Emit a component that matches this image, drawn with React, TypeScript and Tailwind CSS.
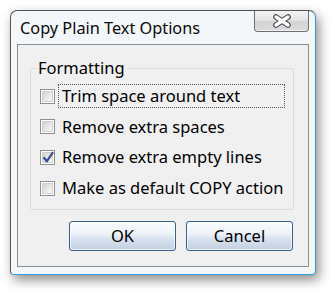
import React from "react";

const font = { fontFamily: '"Noto Sans", "Open Sans", sans-serif' };

function Check({ checked }: { checked?: boolean }) {
  return (
    <div className="w-[15px] h-[15px] shrink-0 border border-[#8e8f8f] bg-white p-[1px]">
      <div className="w-full h-full border border-[#cfcfcf] bg-[linear-gradient(135deg,#d2d2d2_0%,#e9e9e9_55%,#f7f7f7_100%)] relative">
        {checked && (
          <svg viewBox="0 0 10 10" className="absolute left-[-1px] top-[-2px] w-[12px] h-[12px]">
            <path d="M1.3 5.2 L4 8.6 L9.2 1" fill="none" stroke="#3a4f93" strokeWidth="1.9" strokeLinejoin="round" />
          </svg>
        )}
      </div>
    </div>
  );
}

function Row({ label, checked, focus }: { label: string; checked?: boolean; focus?: boolean }) {
  return (
    <div className="h-[30.6px] flex items-center">
      <Check checked={checked} />
      <div
        className={`ml-[3px] h-[24px] flex items-center pl-[3px] pr-[5px] border border-dotted ${
          focus ? "border-[#555] w-[227px]" : "border-transparent"
        } text-[16.5px] text-black whitespace-nowrap`}
      >
        {label}
      </div>
    </div>
  );
}

function Btn({ children }: { children: React.ReactNode }) {
  return (
    <div className="w-[107px] h-[30px] rounded-[3px] border border-[#3b5f8c] bg-[linear-gradient(180deg,#f7fafd_0%,#edf2f8_45%,#dbe4f0_55%,#c3d0e2_100%)] shadow-[inset_0_0_0_1px_rgba(255,255,255,0.7)] flex items-center justify-center text-[16.5px] text-black">
      {children}
    </div>
  );
}

export default function App() {
  return (
    <div className="w-[335px] h-[294px] bg-white pl-[10px] pt-[10px]" style={font}>
      <div className="w-[306px] h-[265px] flex flex-col rounded-t-[7px] rounded-b-[4px] border border-[#505357] border-r-[#3f93bd] border-b-[#2aa3dc] bg-[#f4f7f9] shadow-[3px_5px_12px_rgba(0,0,0,0.45)]">
        <div className="h-[33px] flex items-start justify-between pl-[9px] pr-[6px]">
          <div className="pt-[6px] text-[16.3px] leading-[22px] text-[#0a0a0a]">Copy Plain Text Options</div>
          <div className="w-[55px] h-[21px] border border-t-0 border-[#6c7075] rounded-b-[4px] bg-[linear-gradient(180deg,#f3f3f3_0%,#e4e4e4_45%,#d3d3d3_55%,#dcdcdc_100%)] shadow-[inset_0_-1px_0_rgba(255,255,255,0.6)] flex items-center justify-center">
            <svg viewBox="0 0 18 14" className="w-[18px] h-[14px]">
              <g strokeLinecap="round">
                <path d="M3 3 L15 11 M15 3 L3 11" stroke="#3f444b" strokeWidth="5.6" />
                <path d="M3 3 L15 11 M15 3 L3 11" stroke="#ffffff" strokeWidth="3.4" />
              </g>
            </svg>
          </div>
        </div>
        <div className="ml-[6px] w-[292px] h-[223px] border border-[#8b8e94] bg-[#f0f0f0] flex flex-col">
          <fieldset className="ml-[12px] mt-[13px] w-[264px] h-[152px] border border-[#d5dfe5] rounded-[3px] px-[4px] pb-[4px]">
            <legend className="ml-[1px] px-[2px] text-[16.5px] leading-[20px] text-black">Formatting</legend>
            <div className="pl-[5px] pt-[3px] flex flex-col">
              <Row label="Trim space around text" focus />
              <Row label="Remove extra spaces" />
              <Row label="Remove extra empty lines" checked />
              <Row label="Make as default COPY action" />
            </div>
          </fieldset>
          <div className="mt-[11px] flex justify-end gap-[10px] pr-[15px]">
            <Btn>OK</Btn>
            <Btn>Cancel</Btn>
          </div>
        </div>
      </div>
    </div>
  );
}
